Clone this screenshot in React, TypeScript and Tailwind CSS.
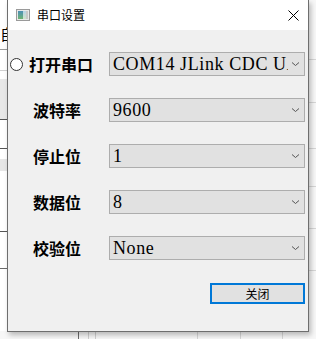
import React from "react";

const cjk = { fontFamily: '"Noto Sans CJK SC", "Noto Sans", sans-serif' };
const serif = { fontFamily: '"Liberation Serif", "Noto Sans CJK SC", serif' };

function Chevron() {
  return (
    <svg width="9" height="6" viewBox="0 0 9 6" className="shrink-0">
      <path d="M1 1.5 L4.5 4.5 L8 1.5" fill="none" stroke="#555" strokeWidth="1" />
    </svg>
  );
}

function Combo({ value }: { value: string }) {
  return (
    <div className="flex h-[24px] w-[196px] items-center border border-[#adadad] bg-[#e1e1e1] pl-[3px] pr-[4px]">
      <div
        className="min-w-0 flex-1 overflow-hidden whitespace-nowrap text-[18px] leading-[22px] tracking-[0.6px] text-black"
        style={serif}
      >
        {value}
      </div>
      <div className="ml-[2px] flex w-[10px] justify-center">
        <Chevron />
      </div>
    </div>
  );
}

function Row({ label, value }: { label: string; value: string }) {
  return (
    <div className="flex h-[24px] items-center">
      <div className="w-[101px] pl-[25px] text-[16px] font-bold leading-none text-black" style={cjk}>
        {label}
      </div>
      <Combo value={value} />
    </div>
  );
}

export default function App() {
  return (
    <div className="relative h-[339px] w-[316px] overflow-hidden bg-[#f4f4f4]">
      {/* background application (behind the dialog) */}
      <div className="absolute left-0 top-0 h-full w-[8px] bg-white">
        <div className="mt-[26px] text-[15px] leading-none text-black" style={cjk}>
          自
        </div>
        <div className="mt-[8px] h-px w-full bg-[#9a9a9a]" />
        <div className="mt-[20px] h-px w-full bg-[#d0d0d0]" />
        <div className="mt-[8px] h-[40px] w-full bg-[#e8e8e8]" />
        <div className="h-px w-full bg-[#555]" />
        <div className="mt-[28px] h-px w-full bg-[#555]" />
        <div className="mt-[10px] h-[12px] w-full bg-[#e6e6e6]" />
        <div className="mt-[60px] h-px w-full bg-[#555]" />
        <div className="mt-[36px] h-px w-full bg-[#6a6a6a]" />
      </div>
      <div className="absolute right-0 top-0 h-full w-[8px] bg-[#f7f7f7]">
        <div className="mt-[59px] h-px w-full bg-[#d6d6d6]" />
        <div className="mt-[42px] h-px w-full bg-[#d6d6d6]" />
        <div className="mt-[45px] h-px w-full bg-[#d6d6d6]" />
        <div className="mt-[37px] h-px w-full bg-[#d6d6d6]" />
        <div className="mt-[41px] h-px w-full bg-[#d6d6d6]" />
        <div className="mt-[41px] h-px w-full bg-[#d6d6d6]" />
      </div>
      <div className="absolute bottom-0 left-0 flex h-[8px] w-full bg-[#f7f7f7]">
        <div className="ml-[78px] h-full w-px bg-[#6a6a6a]" />
        <div className="ml-[9px] h-full w-px bg-[#cfcfcf]" />
        <div className="ml-[6px] h-full w-px bg-[#cfcfcf]" />
        <div className="ml-[101px] h-full w-px bg-[#d6d6d6]" />
        <div className="ml-[42px] h-full w-px bg-[#d6d6d6]" />
        <div className="ml-[41px] h-full w-px bg-[#d6d6d6]" />
      </div>

      {/* dialog window */}
      <div className="absolute left-[7px] top-0 flex h-[332px] w-[302px] flex-col border-x border-b border-[#6e6e6e] shadow-[2px_3px_5px_rgba(0,0,0,0.25)]">
        <div className="flex h-[30px] items-center bg-white pl-[8px] pr-[9px]">
          <div className="flex h-[12px] w-[14px] border border-[#9a9a9a] bg-[#e8e8e8] p-[1px]">
            <div className="h-full w-[5px] bg-gradient-to-b from-[#4d8fb5] to-[#6fb36f]" />
            <div className="h-full flex-1 bg-gradient-to-b from-[#b9d3e6] to-[#cfe3c9]" />
            <div className="h-full w-[2px] bg-[#c8c8c8]" />
          </div>
          <div className="ml-[7px] flex-1 text-[12px] leading-none text-black" style={cjk}>
            串口设置
          </div>
          <svg width="11" height="11" viewBox="0 0 11 11">
            <path d="M0.5 0.5 L10.5 10.5 M10.5 0.5 L0.5 10.5" stroke="#000" strokeWidth="1" />
          </svg>
        </div>
        <div className="flex flex-1 flex-col gap-[22px] bg-[#f0f0f0] pt-[22px]">
          <div className="flex h-[24px] items-center">
            <div className="flex w-[101px] items-center pl-[2px]">
              <div className="h-[13px] w-[13px] rounded-full border border-[#333] bg-white" />
              <div className="ml-[6px] text-[16px] font-bold leading-none text-black" style={cjk}>
                打开串口
              </div>
            </div>
            <Combo value="COM14 JLink CDC UART Port" />
          </div>
          <Row label="波特率" value="9600" />
          <Row label="停止位" value="1" />
          <Row label="数据位" value="8" />
          <Row label="校验位" value="None" />
          <div className="-mt-[-1px] flex justify-end pr-[3px]">
            <button
              className="flex h-[21px] w-[95px] items-center justify-center border-2 border-[#0078d7] bg-[#e1e1e1] text-[12px] leading-none text-black"
              style={cjk}
            >
              关闭
            </button>
          </div>
        </div>
      </div>
    </div>
  );
}
